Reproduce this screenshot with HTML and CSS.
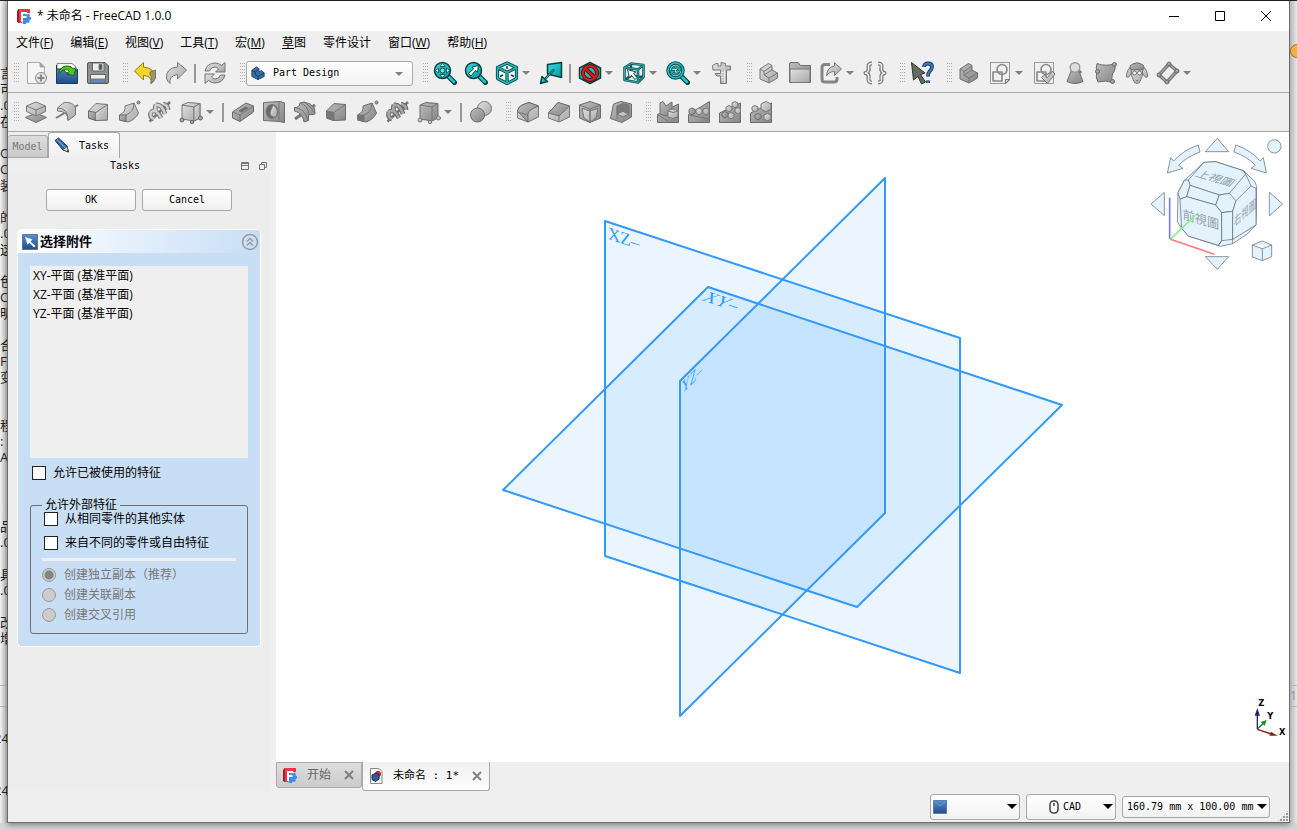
FILE: index.html
```html
<!DOCTYPE html>
<html lang="zh-CN">
<head>
<meta charset="utf-8">
<title>未命名 - FreeCAD 1.0.0</title>
<link rel="stylesheet" href="styles.css">
</head>
<body>
<svg class="defs" aria-hidden="true">
  <defs>
    <linearGradient id="lite" x1="0" y1="0" x2="1" y2="1"><stop offset="0" stop-color="#e2e2e2"/><stop offset="1" stop-color="#a6a6a6"/></linearGradient>
    <linearGradient id="dark" x1="0" y1="0" x2="1" y2="1"><stop offset="0" stop-color="#bdbdbd"/><stop offset="1" stop-color="#858585"/></linearGradient>
    <linearGradient id="teal" x1="0" y1="0" x2="1" y2="1"><stop offset="0" stop-color="#34e0e2"/><stop offset="1" stop-color="#06989a"/></linearGradient>
    <linearGradient id="blue" x1="0" y1="0" x2="0" y2="1"><stop offset="0" stop-color="#5a8fcf"/><stop offset="1" stop-color="#204a87"/></linearGradient>
    <symbol id="logo" viewBox="0 0 16 16"><path d="M2 2Q2 1 3 1H14V5H6V15H3Q2 15 2 14Z" fill="#e8384a"/><path d="M1 3L3 1V15L1 14Z" fill="#a8182c"/><path d="M9 6l2 .5 1.5-1 1.500 1.500-.7 1.500 1.700.8v2l-1.700.6.6 1.700-1.500 1.400-1.600-.8-.9 1.800H7L6 13V6z" fill="#3f8bea"/><path d="M5 4h6v2H7v2h3.500v2H7v4H5z" fill="#fff"/></symbol>
  </defs>
</svg>
<div class="desk">
  <aside class="behind-left" aria-hidden="true">
    <div class="frag first">言<br>可<br>.0<br>在<br><br>O<br>C<br>装<br><br>的<br>.0<br>这<br><br>色<br>C<br>明<br><br>合<br>F<br>变<br><br><br>程<br>:<br>A</div>
    <div class="frag second">品<br>.0<br><br>具<br>.0<br><br>改<br>增</div>
    <div class="rules"></div>
    <div class="frag nums">24</div>
    <div class="frag nums last">24</div>
  </aside>
  <div class="window">
    <header class="titlebar">
      <svg class="logo" width="16" height="16"><use href="#logo"/></svg>
      <h1>* 未命名 - FreeCAD 1.0.0</h1>
      <div class="winbtns">
        <button aria-label="最小化"><svg width="12" height="12"><path d="M1 6.500H11"/></svg></button>
        <button aria-label="最大化"><svg width="12" height="12"><path d="M1.500 1.500H10.500V10.500H1.500Z"/></svg></button>
        <button aria-label="关闭"><svg width="12" height="12"><path d="M1 1L11 11M11 1L1 11"/></svg></button>
      </div>
    </header>
    <nav class="menubar">
      <button>文件(<u>F</u>)</button><button>编辑(<u>E</u>)</button><button>视图(<u>V</u>)</button><button>工具(<u>T</u>)</button><button>宏(<u>M</u>)</button><button><u>草</u>图</button><button>零件设计</button><button>窗口(<u>W</u>)</button><button>帮助(<u>H</u>)</button>
    </nav>

    <div class="toolbar" role="toolbar" aria-label="标准">
      <span class="grip start"></span>
      <button class="tb" aria-label="新建"><svg viewBox="0 0 24 24"><path d="M3.500 1.500H16L20.500 6V22.500H3.500Z" fill="#f4f4f4" stroke="#aaa"/><path d="M16 1.500V6H20.500" fill="#999" stroke="#aaa"/><circle cx="17" cy="17" r="5.500" fill="#e6e6e6" stroke="#888"/><path d="M17 13.500V20.500M13.500 17H20.500" stroke="#888" stroke-width="2"/></svg></button>
      <button class="tb" aria-label="打开"><svg viewBox="0 0 24 24"><path d="M2 2.500H17L21 6V12H2Z" fill="#f8f8f8" stroke="#888"/><path d="M1.500 4V22.500H22.500V8L19 12L13 14L8 8H1.500Z" fill="url(#blue)" stroke="#173a6b"/><path d="M3.500 13.500Q5 5 12 5Q17 5 18 8L21 7L18.500 15L11.500 12L14.500 10.500Q13 8.500 10.500 8.500Q6.500 8.500 3.500 13.500Z" fill="#4fc61c" stroke="#1f6b08"/></svg></button>
      <button class="tb" aria-label="保存"><svg viewBox="0 0 24 24"><path d="M1.500 3Q1.500 1.500 3 1.500H19L22.500 5V21Q22.500 22.500 21 22.500H3Q1.500 22.500 1.500 21Z" fill="#8e928c" stroke="#555753"/><path d="M6.500 2H18V10H6.500Z" fill="#eee" stroke="#666"/><path d="M13 3.500H16V8.500H13Z" fill="#555"/><path d="M4.500 13.500H19.500V22H4.500Z" fill="#eef0f2" stroke="#666"/><path d="M5 18H19V21.500H5Z" fill="#5f88bf"/></svg></button>
      <span class="grip"></span>
      <button class="tb" aria-label="撤销"><svg viewBox="0 0 24 24"><path d="M1.500 10L10.500 1.500V6Q22 7 21.500 17Q20.500 21 18 22.500Q19.500 15 10.500 14.500V19Z" fill="#f1d52c" stroke="#9a8000"/><path d="M17 11L22.500 9V17Q21 21 18 22.500Q19.500 16 17 14Z" fill="#9b9468"/></svg></button>
      <button class="tb" aria-label="重做"><svg viewBox="0 0 24 24"><path d="M22.500 9L13.500 1.500V6Q2 7 2.500 17Q3.500 21 6 22.500Q4.500 15 13.500 13.500V18Z" class="m"/></svg></button>
      <span class="sep"></span>
      <button class="tb" aria-label="刷新"><svg viewBox="0 0 24 24"><path d="M2 10Q4 2 12 2Q16 2 18.500 4.500L22 1.500V11H12.500L15.500 8Q14 6 12 6Q8 6 6.500 10Z" class="m"/><path d="M22 14Q20 22 12 22Q8 22 5.500 19.500L2 22.500V13H11.500L8.500 16Q10 18 12 18Q16 18 17.500 14Z" class="m"/></svg></button>
      <span class="grip"></span>
      <label class="combo" aria-label="工作台"><svg viewBox="0 0 16 16"><path d="M1 5L6 1L9 3V7L12 5L15 8V12L8 15.500L1 12Z" fill="#3a6ea8" stroke="#16345c"/><path d="M1 5L5 7V10L8 12V15M5 7L9 3M8 12L15 8" fill="none" stroke="#16345c"/></svg><select><option>Part Design</option></select></label>
      <span class="grip"></span>
      <button class="tb" aria-label="显示全部"><svg viewBox="0 0 24 24"><path d="M15 15L21.500 21.500" class="hand"/><path d="M15 15L21 21" class="handi"/><circle cx="9.500" cy="9.500" r="8" class="t"/><path d="M9.500 2.500L12 5.500H7ZM9.500 16.500L12 13.500H7ZM2.500 9.500L5.500 7V12ZM16.500 9.500L13.500 7V12Z" fill="#fff" stroke="#0b3e40" stroke-width=".8"/><circle cx="9.500" cy="9.500" r="2.500" fill="#5ee" stroke="#0b3e40"/></svg></button>
      <button class="tb" aria-label="显示选择"><svg viewBox="0 0 24 24"><path d="M15 15L21.500 21.500" class="hand"/><path d="M15 15L21 21" class="handi"/><circle cx="9.500" cy="9.500" r="8" class="t"/><path d="M14.500 4.500L13.500 11L11.500 9.500L7 15L4.500 12.500L9.500 8L8 6Z" fill="#fff" stroke="#0b3e40"/></svg></button>
      <button class="tb" aria-label="等轴测"><svg viewBox="0 0 24 24"><path d="M12 2L21.500 6.500V17.500L12 22.500L2.500 17.500V6.500ZM2.500 6.500L12 11.500L21.500 6.500M12 11.500V22.500" fill="#f3fbfb" stroke="#0a4648" stroke-width="3.200"/><path d="M12 2L21.500 6.500V17.500L12 22.500L2.500 17.500V6.500ZM2.500 6.500L12 11.500L21.500 6.500M12 11.500V22.500" fill="none" stroke="#20b9bb" stroke-width="1.500"/><path d="M12 5V8M5 15.500L8 14M19 15.500L16 14" stroke="#0a4648" stroke-width="1.500"/></svg></button><button class="drop" aria-label="更多"></button>
      <button class="tb" aria-label="对齐到选择"><svg viewBox="0 0 24 24"><path d="M8.500 3.500L22.500 1.500V16.500L8.500 13Z" class="t"/><path d="M15 8.500L5 19" stroke="#0b3e40" stroke-width="2.500"/><path d="M15 8.500L5 19" stroke="#25c9cb"/><path d="M1.500 22.500L3 15.500L8.500 20.500Z" class="t"/></svg></button>
      <span class="sep"></span>
      <button class="tb" aria-label="绘制样式"><svg viewBox="0 0 24 24"><path d="M12 1.500L22.500 7V17L12 22.500L1.500 17V7Z" class="t"/><circle cx="12" cy="12" r="7" fill="none" stroke="#5a0508" stroke-width="4"/><path d="M7 7L17 17" stroke="#5a0508" stroke-width="4"/><circle cx="12" cy="12" r="7" fill="none" stroke="#dc1c20" stroke-width="2.200"/><path d="M7 7L17 17" stroke="#dc1c20" stroke-width="2.200"/></svg></button><button class="drop" aria-label="更多"></button>
      <button class="tb" aria-label="选择元素"><svg viewBox="0 0 24 24"><path d="M2.500 6.500L9 2.500L21.500 4V16L16 21.500L2.500 19ZM2.500 6.500L16 8.500L21.500 4M16 8.500V21.500M9 2.500V14.500L3 19M9 14.500L21 16" fill="#dff3f3" stroke="#16585c" stroke-width="2.600"/><path d="M2.500 6.500L9 2.500L21.500 4V16L16 21.500L2.500 19ZM2.500 6.500L16 8.500L21.500 4M16 8.500V21.500" fill="none" stroke="#3aa6a8"/><path d="M5.500 8.500L14 11L11.500 12.500L15 16.500L13 18.500L9.500 14.500L7.500 17Z" fill="#fff" stroke="#14484c"/></svg></button><button class="drop" aria-label="更多"></button>
      <button class="tb" aria-label="缩放"><svg viewBox="0 0 24 24"><path d="M15 15L21.500 21.500" class="hand"/><path d="M15 15L21 21" class="handi"/><circle cx="9.500" cy="9.500" r="7.500" fill="#b5e8e8" stroke="#0b4b4d" stroke-width="3.500"/><circle cx="9.500" cy="9.500" r="7.500" fill="none" stroke="#1cc4c6" stroke-width="1.600"/><path d="M5 8.500Q6 5 9.500 5Q12 5 13 6.500L15 5V10H10L12 8Q8 6 5 8.500ZM14 11Q13 14 9.500 14Q7 14 6 12.500L4.500 14V9.500H9L7.500 11.500Q11 13 14 11Z" fill="#1cb0b2" stroke="#0b4b4d" stroke-width=".8"/></svg></button><button class="drop" aria-label="更多"></button>
      <button class="tb" aria-label="测量"><svg viewBox="0 0 24 24"><path d="M2.500 4.500L6 2.500H8V5H11V1.500L15.500 2.500V5H20.500V9H16.500V22.500H10.500V15H7L5 12.500H10.500V9H3Z" class="m"/><path d="M14.500 10V22M11 11.500H13.500M11 14H13.500M11 16.500H13.500M11 19H13.500" stroke="#eee"/></svg></button>
      <span class="grip"></span>
      <button class="tb" aria-label="零件"><svg viewBox="0 0 24 24"><path d="M3 8L11.500 2.500L15 4.500V9L20.500 12V17L12 22L3 18Z" class="l"/><path d="M3 8L7 10.500V14L12 17V22M7 10.500L15 5M7 14L15 9M12 17L20.500 12" fill="none"/></svg></button>
      <button class="tb" aria-label="组"><svg viewBox="0 0 24 24"><path d="M1.500 21.500V3Q1.500 1.500 3 1.500H10L12.500 4.500H22.500V21.500Z" class="d"/><path d="M2 8H22V21.500H2Z" class="m"/></svg></button>
      <button class="tb" aria-label="链接"><svg viewBox="0 0 24 24"><path d="M11 3.500H6Q3 3.500 3 6.500V18Q3 21 6 21H15Q18 21 18 18V16" fill="none" stroke="#858585" stroke-width="3"/><path d="M22.500 8L15.500 1.500V5Q8 6 7.500 15Q10 10.500 15.500 10.500V14.500Z" class="m"/></svg></button><button class="drop" aria-label="更多"></button>
      <button class="tb" aria-label="变量集"><svg viewBox="0 0 24 24"><path d="M9 2.500Q5 2.500 5.500 6Q6.500 11 2.500 12Q6.500 13 5.500 18Q5 21.500 9 21.500M15 2.500Q19 2.500 18.500 6Q17.500 11 21.500 12Q17.500 13 18.500 18Q19 21.500 15 21.500" fill="none" stroke="#777" stroke-width="4"/><path d="M9 2.500Q5 2.500 5.500 6Q6.500 11 2.500 12Q6.500 13 5.500 18Q5 21.500 9 21.500M15 2.500Q19 2.500 18.500 6Q17.500 11 21.500 12Q17.500 13 18.500 18Q19 21.500 15 21.500" fill="none" stroke="#eee" stroke-width="1.600"/></svg></button>
      <span class="grip"></span>
      <button class="tb" aria-label="这是什么"><svg viewBox="0 0 24 24"><path d="M1.500 1.500L15 12L10.500 13.500L15.500 21L11.500 23L8 15.500L3.500 19Z" fill="#636a60" stroke="#2e3436"/><path d="M14 6Q14 2.500 18 2.500Q22 2.500 22 6Q22 8.500 19.500 10.500Q18 12 18 15.500M18 19.500V22" fill="none" stroke="#173963" stroke-width="3.800"/><path d="M14 6Q14 2.500 18 2.500Q22 2.500 22 6Q22 8.500 19.500 10.500Q18 12 18 15.500M18 19.500V22" fill="none" stroke="#3f79bd" stroke-width="2"/></svg></button>
      <span class="grip"></span>
      <button class="tb" aria-label="实体"><svg viewBox="0 0 24 24"><path d="M3 8L11.500 2.500L15 4.500V9L20.500 12V17L12 22L3 18Z" class="d"/><path d="M3 8L7 10.500V14L12 17V22M7 10.500L15 5M7 14L15 9M12 17L20.500 12" fill="none"/></svg></button>
      <button class="tb" aria-label="草图"><svg viewBox="0 0 24 24"><path d="M2.500 1.500H21.500V19L18 22.500H2.500Z" fill="#f0f0f0" stroke="#999"/><circle cx="14" cy="8.500" r="5" fill="none" stroke="#888" stroke-width="1.600"/><path d="M5 11H14V20H5Z" fill="none" stroke="#888" stroke-width="1.600"/><path d="M17.500 22.500V18.500H21.500Z" class="m"/></svg></button><button class="drop" aria-label="更多"></button>
      <button class="tb" aria-label="验证草图"><svg viewBox="0 0 24 24"><path d="M2.500 1.500H21.500V22.500H2.500Z" fill="#f0f0f0" stroke="#999"/><circle cx="14" cy="8.500" r="5" fill="none" stroke="#888" stroke-width="1.600"/><path d="M5 11H14V20H5Z" fill="none" stroke="#888" stroke-width="1.600"/><path d="M9.500 16.500L12.500 14L15 17L20.500 10L23 13L15.500 22.500Z" class="m"/></svg></button>
      <button class="tb" aria-label="检查几何"><svg viewBox="0 0 24 24"><path d="M8.500 9L4 20.500Q12 24.500 20 20.500L15.500 9Z" class="d"/><path d="M15 9L18 12" stroke="#777" stroke-width="3"/><circle cx="12" cy="6.500" r="4.800" fill="#ddd" stroke="#999" stroke-width="1.500"/></svg></button>
      <button class="tb" aria-label="形状绑定"><svg viewBox="0 0 24 24"><path d="M3 2.500Q12 6 21 2.500Q22 9 18.500 13Q17 17 19 21.500Q11 19 4 21Q1 16 3 11Q1.500 7 3 2.500Z" class="d"/><circle cx="20.500" cy="3.500" r="2" class="d"/><circle cx="3.500" cy="10.500" r="2" class="d"/><circle cx="18.500" cy="20.500" r="2" class="d"/></svg></button>
      <button class="tb" aria-label="克隆"><svg viewBox="0 0 24 24"><path d="M6.500 5.500Q1.500 8 1.500 16Q4 17.500 6.500 12Z" class="m"/><path d="M17.500 5.500Q22.500 8 22.500 16Q20 17.500 17.500 12Z" class="m"/><path d="M6 8L7 16L9.500 21.500Q12 23.500 14.500 21.500L17 16L18 8Z" class="l"/><path d="M5.500 8Q4 4 8 3Q12 .5 16 3Q20 4 18.500 8Q15 10 12 8.500Q9 10 5.500 8Z" class="d"/><circle cx="9.500" cy="12" r="2" fill="#f4f4f4"/><circle cx="14.500" cy="12" r="2" fill="#f4f4f4"/><path d="M10.500 19L12 20L13.500 19" fill="none"/></svg></button>
      <button class="tb" aria-label="基准"><svg viewBox="0 0 24 24"><path d="M13 3L21 10L11 21L3 14Z" fill="none" stroke="#7d7d7d" stroke-width="3.500"/><path d="M13 3L21 10L11 21L3 14Z" fill="none" stroke="#b5b5b5"/><g class="d"><circle cx="13" cy="3" r="2"/><circle cx="21" cy="10" r="2"/><circle cx="11" cy="21" r="2"/><circle cx="3" cy="14" r="2"/></g></svg></button><button class="drop" aria-label="更多"></button>
    </div>

    <div class="toolbar" role="toolbar" aria-label="零件设计">
      <span class="grip start"></span>
      <button class="tb" aria-label="凸台"><svg viewBox="0 0 24 24"><path d="M1.500 17.500L12 13L22.500 17.500L12 22.500Z" class="d"/><path d="M2.500 6L12 2L21.500 6V11.500L12 16L2.500 11.500Z" class="l"/><path d="M2.500 6L12 10L21.500 6M12 10V15.500" fill="none"/></svg></button>
      <button class="tb" aria-label="旋转"><svg viewBox="0 0 24 24"><path d="M1 18L23 5" stroke-width="2"/><path d="M2.500 8L9 2.500Q18 1.500 20.500 8V15L13 20.500Q13 11 2.500 11Z" class="l"/><path d="M2.500 8Q13 8 13 20.500" fill="none"/></svg></button>
      <button class="tb" aria-label="放样"><svg viewBox="0 0 24 24"><path d="M2.500 11L10 3.500L21.500 4.500V20L9.500 20.500L2.500 18Z" class="l"/><path d="M2.500 11L10 12.500V20.500L2.500 18Z" class="d"/><path d="M10 12.500L21.500 4.500V20L10 20.500" class="m"/></svg></button>
      <button class="tb" aria-label="扫掠"><svg viewBox="0 0 24 24"><path d="M8 6L17 3L21.500 13Q18 20 11 22L2.500 20V15Q9 12 8 6Z" class="l"/><path d="M2.500 15H9V21.500L2.500 20Z" class="d"/><path d="M9 15Q17 12 17 3" fill="none"/><circle cx="21.500" cy="2.500" r="1.500" class="d"/></svg></button>
      <button class="tb" aria-label="螺旋"><svg viewBox="0 0 24 24"><path d="M1.500 21.500L22 2" stroke-width="2.500"/><path d="M3 12Q8 8 13 18M3 12Q1 17 6 19M8 5Q14 4 17 14M8 5Q6 9 9 11M15 4Q20 5 20 10" fill="none" stroke="#747474" stroke-width="4.600"/><path d="M3 12Q8 8 13 18M3 12Q1 17 6 19M8 5Q14 4 17 14M8 5Q6 9 9 11M15 4Q20 5 20 10" fill="none" stroke="#cfcfcf" stroke-width="2.600"/></svg></button>
      <button class="tb" aria-label="增料基元"><svg viewBox="0 0 24 24"><path d="M3 5L9 2.500L21 3.500V18L15 21L3 19Z" class="l"/><path d="M3 5L15 7L21 3.500M15 7V21" fill="none"/><path d="M15 7L21 3.500V18L15 21Z" class="m"/><g class="d"><circle cx="3" cy="20" r="2"/><circle cx="13" cy="22" r="1.700"/><circle cx="21.500" cy="18" r="2"/></g></svg></button><button class="drop" aria-label="更多"></button>
      <span class="sep"></span>
      <button class="tb" aria-label="凹坑"><svg viewBox="0 0 24 24"><path d="M1.500 12L15 3L22.500 6V12L9 21.500L1.500 18Z" class="d"/><path d="M1.500 12L9 15L22.500 6M9 15V21.500" fill="none"/><path d="M8 11L14.500 7L17 8L10.500 12Z" fill="#666"/></svg></button>
      <button class="tb" aria-label="孔"><svg viewBox="0 0 24 24"><path d="M1.500 2.500L18 1.500L22.500 3V22.500L17 21.500L1.500 20.500Z" class="d"/><path d="M17 2V21.500" fill="none"/><ellipse cx="10" cy="11.500" rx="6" ry="7" fill="#696969"/><path d="M11 5Q18 9 14 17Q8 18 8 12Z" class="l"/></svg></button>
      <button class="tb" aria-label="旋转槽"><svg viewBox="0 0 24 24"><path d="M2 19L22 5" stroke-width="3"/><path d="M1.500 7.500Q6 8 7 3L11 2Q18 3 21.500 8L22 14L15.500 15V20.500L11 22Q10 13 1.500 11Z" class="d"/><path d="M1.500 7.500Q11 8 15 20M7 3Q15 5 16 15M11 2Q18 6 22 13" fill="none"/></svg></button>
      <button class="tb" aria-label="减料放样"><svg viewBox="0 0 24 24"><path d="M2.500 11L10 3.500L21.500 4.500V20L9.500 20.500L2.500 18Z" class="d"/><path d="M2.500 11L10 12.500V20.500L2.500 18Z" fill="#777"/><path d="M10 12.500L21.500 4.500" fill="none"/></svg></button>
      <button class="tb" aria-label="减料扫掠"><svg viewBox="0 0 24 24"><path d="M8 6L17 3L21.500 13Q18 20 11 22L2.500 20V15Q9 12 8 6Z" class="d"/><path d="M2.500 15H9V21.500L2.500 20Z" fill="#747474"/><path d="M9 15Q17 12 17 3" fill="none"/><circle cx="21.500" cy="2.500" r="1.500" class="d"/></svg></button>
      <button class="tb" aria-label="减料螺旋"><svg viewBox="0 0 24 24"><path d="M1.500 21.500L22 2" stroke-width="2.500"/><path d="M3 12Q8 8 13 18M3 12Q1 17 6 19M8 5Q14 4 17 14M8 5Q6 9 9 11M15 4Q20 5 20 10" fill="none" stroke="#686868" stroke-width="4.600"/><path d="M3 12Q8 8 13 18M3 12Q1 17 6 19M8 5Q14 4 17 14M8 5Q6 9 9 11M15 4Q20 5 20 10" fill="none" stroke="#a6a6a6" stroke-width="2.600"/></svg></button>
      <button class="tb" aria-label="减料基元"><svg viewBox="0 0 24 24"><path d="M3 5L9 2.500L21 3.500V18L15 21L3 19Z" class="d"/><path d="M3 5L15 7L21 3.500M15 7V21" fill="none"/><g class="l"><circle cx="3" cy="20" r="2"/><circle cx="13" cy="22" r="1.700"/><circle cx="21.500" cy="18" r="2"/></g></svg></button><button class="drop" aria-label="更多"></button>
      <span class="sep"></span>
      <button class="tb" aria-label="布尔运算"><svg viewBox="0 0 24 24"><circle cx="15.500" cy="8.500" r="7" class="l"/><circle cx="8.500" cy="15" r="7" class="d"/></svg></button>
      <span class="grip"></span>
      <button class="tb" aria-label="圆角"><svg viewBox="0 0 24 24"><path d="M1.500 12Q2 7 6 5L13 2.500L22.500 6V17L12 22L1.500 18Z" class="m"/><path d="M12 22V14Q12 10 22.500 6L13 2.500L6 5Q2 7 1.500 11Z" class="d"/><path d="M1.500 12L12 15" fill="none"/></svg></button>
      <button class="tb" aria-label="倒角"><svg viewBox="0 0 24 24"><path d="M1.500 13L11 2.500L22.500 6V17L12 22L1.500 18Z" class="m"/><path d="M1.500 13L12 16L22.500 6L11 2.500Z" class="d"/><path d="M12 16V22" fill="none"/></svg></button>
      <button class="tb" aria-label="拔模"><svg viewBox="0 0 24 24"><path d="M1.500 5L12 1.500L22.500 5V18L12 22.500L1.500 18Z" class="d"/><path d="M1.500 5L12 9L22.500 5M12 9V22.500" fill="none"/><path d="M4 8.500L12 11V22L6 18ZM12 11L20 8.500L18 18L12 22Z" class="m"/></svg></button>
      <button class="tb" aria-label="抽壳"><svg viewBox="0 0 24 24"><path d="M4.500 4L12 1.500L22.500 4V17L13 22.500L1.500 18.500Z" class="d"/><path d="M8 6L14 3.500L20 5V14L14 17L8 14Z" fill="#7b7b7b"/><path d="M8 14L14 11.500L20 14L14 17Z" class="l"/><path d="M14 4V12M8 6V19" fill="none"/></svg></button>
      <span class="grip"></span>
      <button class="tb" aria-label="镜像"><svg viewBox="0 0 24 24"><path d="M1.500 14.500L22.500 4V22.500H1.500Z" class="d"/><path d="M4 3L7 1.500L10 6L16 2V12L10 16L4 14Z" class="d"/><path d="M12 11Q17 7 22 11V17Q17 20 12 17Z" class="l"/><path d="M12 11Q17 14 22 11M1.500 14.500L14 22.500" fill="none"/></svg></button>
      <button class="tb" aria-label="线性阵列"><svg viewBox="0 0 24 24"><path d="M1.500 14.500L22.500 1.500V22.500H1.500Z" class="d"/><path d="M1.500 15L22.500 19" fill="none"/><path d="M2 9.500L5 8L8 9.500V13L5 15L2 13Z" class="d"/><path d="M9 9.500L12 8L15 9.500V13L12 15L9 13ZM16 9.500L19 8L22 9.500V13L19 15L16 13Z" class="l"/></svg></button>
      <button class="tb" aria-label="环形阵列"><svg viewBox="0 0 24 24"><path d="M1.500 13L22.500 3V22.500H1.500Z" class="d"/><g class="l"><path d="M14 3L17 1.500L20 3V6L17 8L14 6Z"/><path d="M8 7L11 5.500L14 7V10L11 12L8 10Z"/><path d="M17 9L20 7.500L22.500 9V12L20 14L17 12Z"/><path d="M10 14L13 12.500L16 14V17L13 19L10 17Z"/></g><path d="M4 13L7 11.500L10 13V16L7 18L4 16Z" class="d"/></svg></button>
      <button class="tb" aria-label="多重变换"><svg viewBox="0 0 24 24"><path d="M1.500 13L22.500 3V22.500H1.500Z" class="d"/><g class="l"><path d="M12 4L17 1.500L22 4V9L17 12L12 9Z"/><path d="M3 7L6 5.500L9 7V10L6 12L3 10Z"/><path d="M15 15L18.500 13.500L22 15V19L18.500 21L15 19Z"/></g><path d="M6 15L9 13.500L12 15V18L9 20L6 18Z" class="d"/></svg></button>
    </div>

    <main class="work">
      <section class="dock">
        <div class="docktabs" role="tablist">
          <button class="dtab" role="tab">Model</button>
          <button class="dtab on" role="tab"><svg width="18" height="18" viewBox="0 0 18 18"><path d="M2 3.500L5.500 1L14 9L15.500 15L10 13Z" fill="#2f5f99" stroke="#1b3a63"/><path d="M4 2.500L12.500 11" stroke="#6f9fd6" stroke-width="1.500"/><path d="M10 13L14 9.500L15.500 15Z" fill="#e6d8b0" stroke="#444" stroke-width=".7"/><path d="M13.800 14.300L15.500 15L15 13Z" fill="#111"/></svg>Tasks</button>
        </div>
        <div class="docktitle"><h2>Tasks</h2>
          <button aria-label="折叠"><svg width="10" height="10"><path d="M1.500 1.500H8.500V8.500H1.500ZM1.500 2.500H8.500M1.500 4.500H8.500"/></svg></button>
          <button aria-label="浮动"><svg width="10" height="10"><path d="M3.500 3.500V1.500H8.500V6.500H6.500M1.500 3.500H6.500V8.500H1.500Z"/></svg></button>
        </div>
        <div class="panel">
          <div class="actions"><button>OK</button><button>Cancel</button></div>
          <section class="task">
            <header><svg width="16" height="16" viewBox="0 0 16 16"><path d="M.5.5H15.500V15.500H.5Z" fill="url(#blue)" stroke="#5f7896"/><path d="M3 3L10.500 5.500L8.500 7.500L13.500 12L12 13.500L7.500 8.800L5.500 10.500Z" fill="#fff"/></svg><h3>选择附件</h3><button aria-label="收起"><svg width="18" height="18" viewBox="0 0 18 18"><circle cx="9" cy="9" r="7.500"/><path d="M6 8.500L9 5.500L12 8.500M6 12.500L9 9.500L12 12.500"/></svg></button></header>
            <div class="taskbody">
              <ul><li>XY-平面 (基准平面)</li><li>XZ-平面 (基准平面)</li><li>YZ-平面 (基准平面)</li></ul>
              <label class="check used"><input type="checkbox">允许已被使用的特征</label>
              <fieldset>
                <legend>允许外部特征</legend>
                <label class="check"><input type="checkbox">从相同零件的其他实体</label>
                <label class="check"><input type="checkbox">来自不同的零件或自由特征</label>
                <hr>
                <label class="radio"><input type="radio" name="copy" checked disabled>创建独立副本（推荐）</label>
                <label class="radio"><input type="radio" name="copy" disabled>创建关联副本</label>
                <label class="radio"><input type="radio" name="copy" disabled>创建交叉引用</label>
              </fieldset>
            </div>
          </section>
        </div>
      </section>

      <section class="mdi">
        <div class="view">
          <svg class="scene" viewBox="276 132 1013 630">
            <g class="plane">
              <path d="M605 221L960 338V673L605 556Z"/>
              <path d="M708 287L1062 405L857 607L503 490Z"/>
              <path d="M885 178V513L680 716V381Z"/>
            </g>
            <g class="planename">
              <text transform="matrix(.95 .31 0 1 608 239)">XZ–</text>
              <text transform="matrix(.95 .31 -.7 .7 701 300)">XY–</text>
              <text transform="matrix(.6 -.6 0 1 682 394)">YZ–</text>
            </g>
          </svg>
          <svg class="navcube" width="160" height="150" viewBox="0 0 480 450">
            <g class="nav">
              <path d="M262 25L226 65H296ZM63 222L103 187V257ZM418 187V257L458 222ZM226 380H296L262 418Z"/>
              <circle cx="433" cy="49" r="20"/>
              <path d="M205 45L210 66Q170 80 146 106L159 115L112 129L122 83L131 93Q160 60 205 45Z"/>
              <path d="M317 45L312 66Q352 80 376 106L363 115L409 129L400 83L391 93Q362 60 317 45Z"/>
              <path d="M367 345L397 333L425 345V380L397 392L367 381ZM367 345L397 356L425 345M397 356V392"/>
              <path d="M222 97L257 95L340 122L375 155L380 170L378 285L352 312L308 341L272 349L175 318L155 295L142 275L144 188L164 150Z"/>
              <path d="M222 97L257 95L340 122L347 132L298 190L268 195L180 166L175 150Z"/>
              <path d="M164 150L175 150L180 166L170 200L150 208L144 188Z"/>
              <path d="M180 166L268 195L257 225L170 200Z"/>
              <path d="M268 195L298 190L318 212L308 244L275 248L257 225Z"/>
              <path d="M150 208L170 200L257 225L275 248V332L265 346L175 318L155 295Z"/>
              <path d="M275 248L308 244V328L275 332Z"/>
              <path d="M308 244L318 212L363 168L378 175V285L308 328Z"/>
              <path d="M340 122L347 132L363 168M308 328V341M275 332L265 346" fill="none"/>
            </g>
            <text transform="matrix(.95 .28 -.6 .65 194 138)">上視圖</text>
            <text transform="matrix(.96 .28 0 1 158 266)">前視圖</text>
            <text transform="matrix(.58 -.5 0 1 312 290)">右視圖</text>
            <g class="axes"><path d="M119 203V327" stroke="#7a7af5"/><path d="M121 328L197 255" stroke="#7df58a"/><path d="M121 328L253 373" stroke="#ff7a7a"/></g>
          </svg>
          <svg class="axis" width="36" height="42" viewBox="70 58 108 126">
            <path d="M83 152V105" stroke="#26267c"/><path d="M83 152L104 131" stroke="#1d7a24"/><path d="M83 152L125 166" stroke="#8c2020"/>
            <path d="M83 88L91 111H75Z" fill="#26267c"/><path d="M111 124L93 130L105 141Z" fill="#1d8a24"/><path d="M144 171L119 171L124 159Z" fill="#8c2020"/>
            <text x="86" y="82">Z</text><text x="113" y="121">Y</text><text x="148" y="169">X</text>
          </svg>
        </div>
        <div class="doctabs" role="tablist">
          <div class="doctab"><svg width="16" height="16"><use href="#logo"/></svg><button role="tab">开始</button><button class="x" aria-label="关闭"><svg width="10" height="10"><path d="M1 1L9 9M9 1L1 9"/></svg></button></div>
          <div class="doctab on"><svg width="16" height="18" viewBox="0 0 16 18"><path d="M2.500 1.500H11L14 4.500V16.500H2.500Z" fill="#fafafa" stroke="#888"/><circle cx="10" cy="7" r="3" fill="#d8202a"/><path d="M4 8L8 6L11 8V12L7.500 14.500L4 12.500Z" fill="#2c5b98" stroke="#14305a"/></svg><button role="tab">未命名 : 1*</button><button class="x" aria-label="关闭"><svg width="10" height="10"><path d="M1 1L9 9M9 1L1 9"/></svg></button></div>
        </div>
      </section>
    </main>

    <footer class="status">
      <button class="sbtn" aria-label="通知"><svg width="14" height="14" viewBox="0 0 14 14"><path d="M.5.5H13.500V13.500H.5Z" fill="url(#blue)" stroke="#5580b0"/><path d="M1 1L7 6L13 1" fill="none" stroke="#6a96cc"/></svg></button>
      <button class="sbtn cad"><svg width="10" height="14" viewBox="0 0 10 14"><rect x="1" y="1" width="8" height="12" rx="3.500" fill="#fff" stroke="#444" stroke-width="1.500"/><path d="M5 3V6" stroke="#444" stroke-width="1.500"/></svg>CAD</button>
      <button class="sbtn dim">160.79 mm x 100.00 mm</button>
      <span class="sizegrip"></span>
    </footer>
  </div>
  <aside class="behind-right" aria-hidden="true"><span class="face"></span><span class="frag side">16</span></aside>
</div>
</body>
</html>
```
FILE: styles.css
```css
* { box-sizing: border-box; }
body {
  margin: 0;
  height: 100vh;
  overflow: hidden;
  background: #f0f0f0;
  color: #000;
  font: 12px/16px "Open Sans", "Noto Sans CJK SC", sans-serif;
}
button { font: inherit; color: inherit; background: none; border: 0; padding: 0; margin: 0; }
h1, h2, h3, ul { margin: 0; padding: 0; font-size: inherit; font-weight: normal; }
.defs { position: absolute; width: 0; height: 0; }

.desk { display: grid; grid-template-columns: 7px minmax(0, 1fr) 7px; height: 100%; padding-bottom: 7px; border-top: 1px solid #22202a; background: #d6d6d6; }
.behind-left, .behind-right { overflow: hidden; min-height: 0; }
.behind-left { background: linear-gradient(90deg, #f2f2f2, #c4c4c4); }
.behind-right { background: linear-gradient(90deg, #b4b4b4, #e9e9e9); }
.frag { font-size: 13px; line-height: 16px; color: #222; }
.first { padding-top: 64px; }
.second { margin-top: 53px; }
.rules { height: 22px; margin: 39px 0 23px; border: solid #b8b8b8; border-width: 1px 0; }
.nums { margin-left: -6px; }
.last { margin-top: 36px; }
.face { display: block; width: 14px; height: 14px; margin-top: 43px; border-radius: 50%; background: #f2b04a; border: 1px solid #a86820; }
.side { display: block; margin-top: 627px; padding: 2px 0; color: #8a94a4; font-size: 12px; border: solid #b8b8b8; border-width: 1px 0; }

.window { display: flex; flex-direction: column; min-height: 0; background: #efefef; border: solid #6b6b6b; border-width: 0 1px 1px; box-shadow: 0 2px 6px #0006; }
.titlebar { display: flex; align-items: center; height: 30px; flex: none; padding-left: 8px; background: #fff; }
.titlebar h1 { margin-left: 5px; flex: 1; }
.winbtns { display: flex; }
.winbtns button { width: 46px; height: 30px; display: grid; place-items: center; }
.winbtns path { fill: none; stroke: #000; }
.menubar { display: flex; height: 23px; flex: none; gap: 17px; padding-left: 8px; }

.toolbar { display: flex; align-items: center; height: 39px; flex: none; border-bottom: 1px solid #a8a8a8; }
.grip { width: 16px; height: 20px; flex: none; padding-left: 10px; background: conic-gradient(at 1px 1px, transparent 75%, #b0b0b0 0) 10px 0 / 2px 3px content-box; }
.grip.start { width: 12px; padding: 0 1px 0 5px; background-position: 5px 0; }
.sep { width: 2px; height: 19px; margin: 0 3px; background: #999; flex: none; }
.tb { width: 31px; height: 30px; flex: none; display: grid; place-items: center start; padding-left: 4px; }
.tb svg { width: 24px; height: 24px; stroke-linejoin: round; stroke: #777; stroke-width: 1; }
.l { fill: url(#lite); }
.m { fill: url(#lite); stroke: #777; }
.d { fill: url(#dark); stroke: #6c6c6c; }
.t { fill: url(#teal); stroke: #0b3e40; stroke-width: 1.500; }
.hand { stroke: #0b3e40; stroke-width: 5; stroke-linecap: round; }
.handi { stroke: #20c6c8; stroke-width: 2.500; stroke-linecap: round; }
.drop { width: 13px; height: 30px; flex: none; }
.drop::after, .combo::after { content: ""; display: block; width: 0; border: 4px solid transparent; border-top-color: #808080; border-bottom: 0; }
.combo { position: relative; width: 167px; height: 25px; flex: none; }
.combo select { appearance: none; width: 100%; height: 100%; padding: 0 24px 0 26px; border: 1px solid #a8a8a8; border-radius: 3px; background: linear-gradient(#fff, #f2f2f2); color: #000; }
.combo svg { position: absolute; left: 5px; top: 5px; width: 14px; height: 14px; }
.combo::after { position: absolute; right: 10px; top: 11px; }
select, .dock, .doctabs, .status { font: 10px/14px "DejaVu Sans Mono", "Noto Sans CJK SC", monospace; }

.work { display: flex; flex: 1; min-height: 0; }
.dock { width: 268px; flex: none; display: flex; flex-direction: column; }
.docktabs { display: flex; align-items: flex-end; height: 26px; flex: none; }
.dtab { display: flex; align-items: center; justify-content: center; width: 40px; height: 23px; color: #777; background: linear-gradient(#dcdcdc, #cacaca); border: 1px solid #a8a8a8; border-left: 0; border-radius: 3px 3px 0 0; }
.dtab.on { width: 72px; height: 26px; padding-right: 6px; gap: 8px; color: #000; background: linear-gradient(#fdfdfd, #efefef); border-left: 1px solid #a8a8a8; border-bottom: 0; }
.docktitle { display: flex; align-items: center; height: 15px; flex: none; gap: 8px; }
.docktitle h2 { flex: 1; padding-left: 102px; }
.docktitle button { display: flex; }
.docktitle button:last-child { margin-right: 8px; }
.docktitle path { fill: none; stroke: #777; }
.panel { flex: 1; padding: 16px 6px 0 9px; margin-right: 6px; background: #ededed; }
.actions { display: flex; gap: 6px; padding-left: 29px; }
.actions button { width: 90px; height: 22px; border: 1px solid #a8a8a8; border-radius: 3px; background: linear-gradient(#fff, #f0f0f0); }
.task { width: 244px; margin-top: 18px; border: 1px solid #fff; border-radius: 4px; background: #c8def5; overflow: hidden; }
.task header { display: flex; align-items: center; height: 23px; padding: 0 1px 0 4px; background: linear-gradient(90deg, #fff, #c8def5); }
.task h3 { flex: 1; margin-left: 2px; font-weight: bold; font-size: 13px; }
.task header button, .task header svg { display: block; }
.task header button svg { fill: none; stroke: #999; stroke-width: 1.500; }
.taskbody { padding: 13px 12px 12px; font: 12px/14px "Open Sans", "Noto Sans CJK SC", sans-serif; }
.task ul { height: 192px; padding: 0 3px; list-style: none; background: #efefef; }
.task li { line-height: 19px; }
.check, .radio { display: flex; align-items: center; }
.check { gap: 7px; height: 14px; }
.check.used { margin: 8px 0 0 2px; }
input { appearance: none; width: 14px; height: 14px; margin: 0; background: #fff; border: 1px solid #222; flex: none; }
fieldset { height: 136px; margin: 18px 0 0; padding: 0 11px; border: 1px solid #707070; border-radius: 3px; min-width: 0; }
legend { padding: 0 3px; height: 14px; margin-left: 0; }
fieldset .check { margin-left: 2px; }
fieldset .check + .check { margin-top: 10px; }
hr { height: 3px; margin: 8px 0 7px; border: 0; background: #efefef; }
.radio { gap: 8px; height: 14px; color: #777; }
.radio + .radio { margin-top: 6px; }
.radio input { border-radius: 50%; border-color: #999; background: #ccc; }
.radio input:checked { background: radial-gradient(circle, #858585 4px, #ccc 5px); }

.mdi { flex: 1; min-width: 0; display: flex; flex-direction: column; }
.view { position: relative; flex: 1; min-height: 0; background: #fff; }
.scene { display: block; width: 100%; height: 100%; }
.plane { fill: #3399ff; fill-opacity: .1; stroke: #3399ff; stroke-width: 2; stroke-linejoin: round; }
.planename { fill: #3399ff; font: 18px "Liberation Serif", serif; }
.navcube { position: absolute; right: -1px; top: -2px; }
.nav { fill: #e4f2fd; stroke: #56626c; stroke-width: 2; stroke-linejoin: round; }
.navcube text { font: 38px "Noto Sans CJK TC", sans-serif; fill: #3c4a5480; }
.axes { fill: none; stroke-width: 5; }
.axis { position: absolute; right: 0; bottom: 22px; fill: none; stroke-width: 4; }
.axis text { font: bold 25px "DejaVu Sans", sans-serif; fill: #000; }
.doctabs { display: flex; align-items: flex-start; height: 29px; flex: none; }
.doctab { display: flex; align-items: center; width: 86px; height: 26px; padding: 0 7px 0 5px; color: #666; border: 1px solid #a8a8a8; border-radius: 0 0 3px 3px; background: linear-gradient(#dedede, #cbcbcb); }
.doctab.on { width: 128px; height: 29px; color: #000; background: linear-gradient(#efefef, #fdfdfd); border-top: 0; }
.doctab button { flex: 1; white-space: nowrap; font-size: 12px; text-align: left; padding-left: 9px; }
.doctab.on button { font-size: 11px; }
.doctab .x { flex: none; padding: 0; display: flex; }
.x path { stroke: #808080; stroke-width: 2; }

.status { display: flex; align-items: center; height: 31px; flex: none; gap: 6px; justify-content: flex-end; position: relative; padding-right: 19px; }
.sbtn { display: flex; align-items: center; width: 90px; height: 26px; padding: 0 2px; border: 1px solid #a8a8a8; border-radius: 3px; background: linear-gradient(#fff, #f2f2f2); }
.sbtn::after { content: ""; margin-left: auto; border: 5px solid transparent; border-top-color: #000; border-bottom: 0; }
.cad { padding-left: 22px; gap: 4px; }
.dim { width: 148px; height: 22px; padding-left: 4px; }
.sizegrip { position: absolute; right: 0; bottom: 0; width: 12px; height: 12px; background: conic-gradient(at 2px 2px, transparent 75%, #999 0) 0 0 / 3px 3px; clip-path: polygon(100% 0, 100% 100%, 0 100%); }
```
